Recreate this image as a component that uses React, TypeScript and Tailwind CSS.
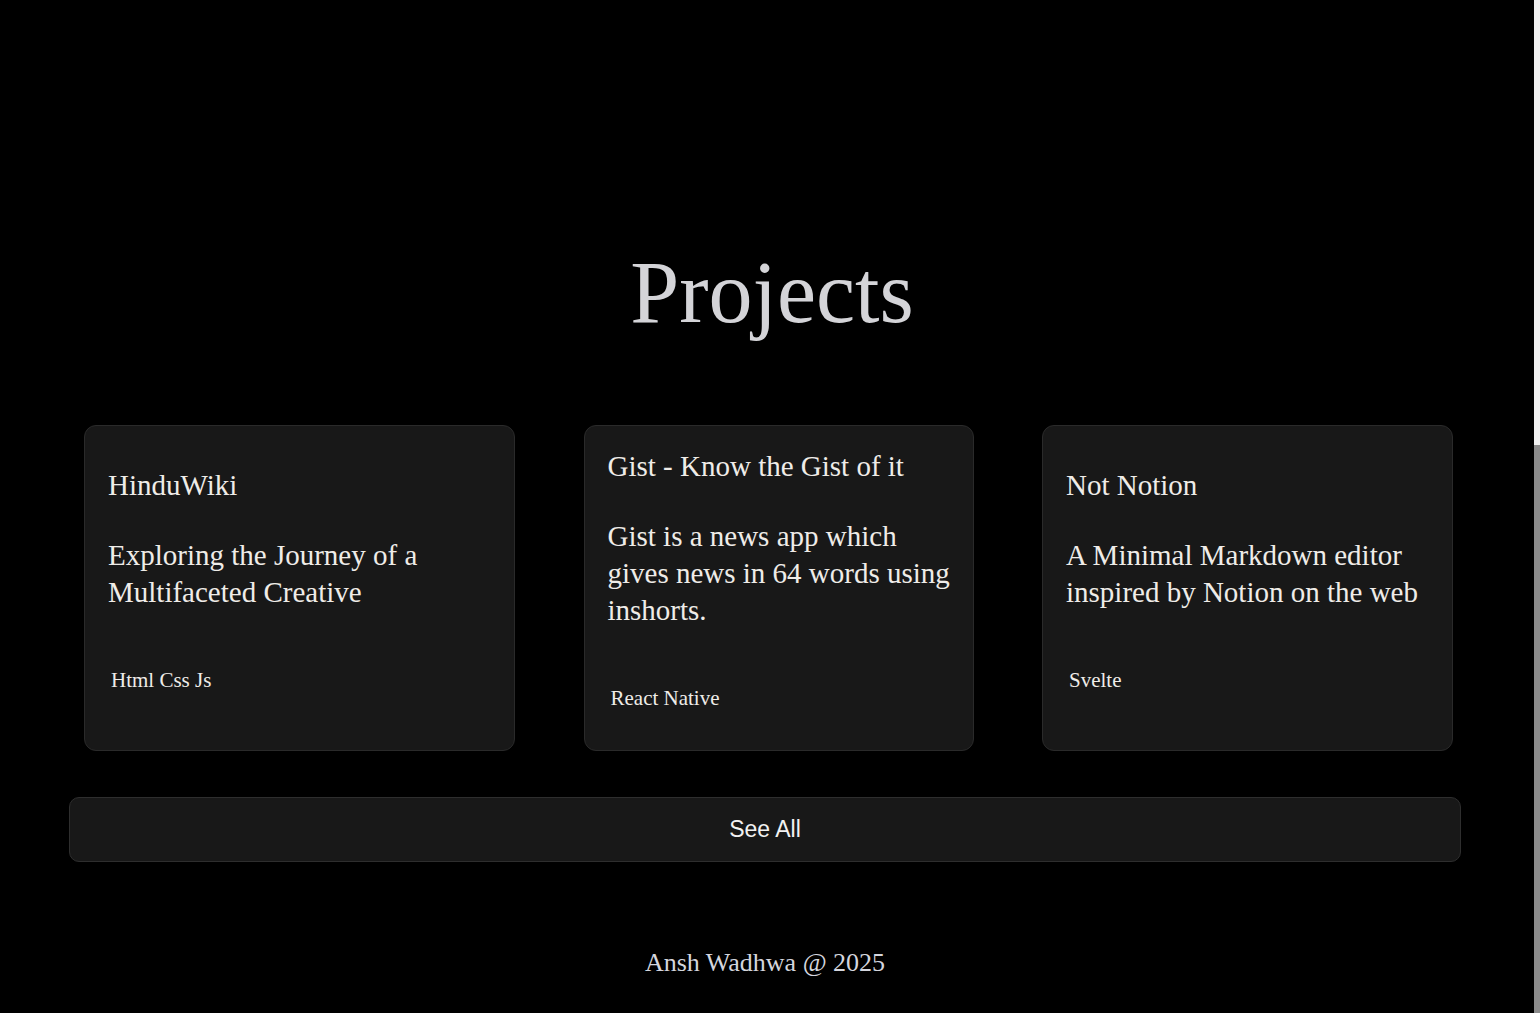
import React from "react"

interface Project {
  title: string
  description: string
  tags: string
  width: string
  descWidth?: string
}

const projects: Project[] = [
  {
    title: "HinduWiki",
    description: "Exploring the Journey of a Multifaceted Creative",
    tags: "Html Css Js",
    width: "w-[431px]",
  },
  {
    title: "Gist - Know the Gist of it",
    description: "Gist is a news app which gives news in 64 words using inshorts.",
    tags: "React Native",
    width: "w-[390px]",
    descWidth: "w-[354px]",
  },
  {
    title: "Not Notion",
    description: "A Minimal Markdown editor inspired by Notion on the web",
    tags: "Svelte",
    width: "w-[411px]",
  },
]

function ProjectCard({ project }: { project: Project }) {
  return (
    <div
      className={`${project.width} h-[326px] flex flex-col justify-center px-[23px] rounded-xl border border-[#2a2a2a] bg-[#181818] text-[#efece8]`}
    >
      <h3 className="text-[29px] leading-[37px]">{project.title}</h3>
      <p className={`${project.descWidth ?? ""} mt-[33px] text-[29px] leading-[37px]`}>{project.description}</p>
      <div className="mt-[55px] mb-[16px] px-[3px] text-[21px] leading-[28px]">{project.tags}</div>
    </div>
  )
}

export default function App() {
  return (
    <div
      className="flex h-[1013px] w-full bg-black overflow-hidden"
      style={{ fontFamily: '"Liberation Serif", "Times New Roman", serif' }}
    >
      <main className="flex-1 flex flex-col pt-[249px] pb-[33px]">
        <div className="mx-auto w-[1392px] -translate-x-[2px] flex flex-col">
          <h2 className="pl-[14px] text-center text-[88px] leading-[88px] text-[#d4d4d8]">Projects</h2>

          <div className="mt-[88px] flex justify-between pl-[15px] pr-[8px]">
            {projects.map((p) => (
              <ProjectCard key={p.title} project={p} />
            ))}
          </div>

          <button
            className="mt-[46px] h-[65px] w-full rounded-[10px] border border-[#2e2e2e] bg-[#181818] text-[23px] text-[#f2f2f2]"
            style={{ fontFamily: '"Liberation Sans", Arial, sans-serif' }}
          >
            See All
          </button>

          <footer className="mt-[83px] text-center text-[26px] leading-[36px] text-[#d4d6de]">
            Ansh Wadhwa @ 2025
          </footer>
        </div>
      </main>

      <div className="w-[6px] flex flex-col justify-end bg-[#f1f1f1]">
        <div className="h-[568px] bg-[#8b8b8b]" />
      </div>
    </div>
  )
}
